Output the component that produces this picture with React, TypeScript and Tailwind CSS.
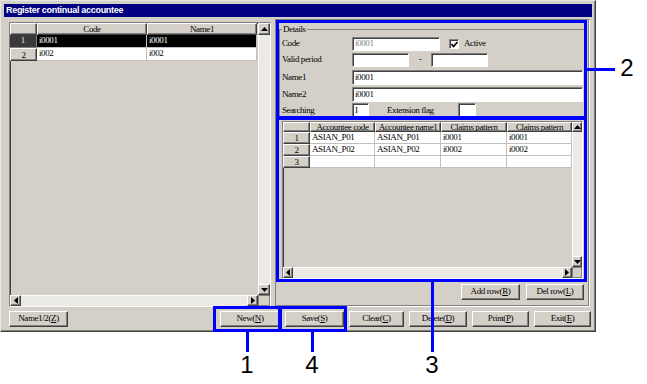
import React from 'react';

const raised =
  'border border-t-white border-l-white border-r-[#404040] border-b-[#404040] shadow-[inset_-1px_-1px_0_#808080] bg-[#d4d0c8]';
const sunken =
  'border border-t-[#808080] border-l-[#808080] border-r-white border-b-white shadow-[inset_1px_1px_0_#404040]';
const cellFont = "font-['Liberation_Serif',serif] text-[9px] tracking-[-0.4px]";

function Arrow({ dir }: { dir: 'up' | 'down' | 'left' | 'right' }) {
  const pts = {
    up: '0,4 3.5,0 7,4',
    down: '0,0 3.5,4 7,0',
    left: '4,0 0,3.5 4,7',
    right: '0,0 4,3.5 0,7',
  }[dir];
  const vertical = dir === 'up' || dir === 'down';
  return (
    <svg width={vertical ? 7 : 4} height={vertical ? 4 : 7} viewBox={vertical ? '0 0 7 4' : '0 0 4 7'}>
      <polygon points={pts} fill="#000" />
    </svg>
  );
}

function ScrollBtn({ dir, className }: { dir: 'up' | 'down' | 'left' | 'right'; className: string }) {
  return (
    <div className={`${raised} ${className} flex items-center justify-center shrink-0`}>
      <Arrow dir={dir} />
    </div>
  );
}

function Btn({ label, hot, w }: { label: string; hot: string; w: string }) {
  return (
    <div className={`${raised} ${w} h-[16px] flex items-center justify-center ${cellFont} text-black`}>
      {label}(<u>{hot}</u>)
    </div>
  );
}

function Hdr({ children }: { children?: React.ReactNode }) {
  return (
    <div className={`${raised} flex items-center justify-center overflow-hidden leading-[10px] ${cellFont} text-black`}>
      {children}
    </div>
  );
}

function Cell({ children, dark }: { children?: React.ReactNode; dark?: boolean }) {
  return (
    <div
      className={`border-r border-b border-[#c0c0c0] flex items-center pl-[2px] overflow-hidden ${cellFont} ${
        dark ? 'bg-black text-white' : 'bg-white text-black'
      }`}
    >
      {children}
    </div>
  );
}

function Field({ w, value, gray }: { w: string; value?: string; gray?: boolean }) {
  return (
    <div
      className={`${sunken} ${w} h-full bg-white flex items-center pl-[2px] ${cellFont} ${
        gray ? 'text-[#808080]' : 'text-black'
      }`}
    >
      {value}
    </div>
  );
}

function LeftGrid() {
  return (
    <div className={`${sunken} w-[262px] h-[285px] flex flex-col bg-[#d4d0c8]`}>
      <div className="flex flex-1 min-h-0">
        <div className="flex-1">
          <div className="grid grid-cols-[27px_110px_110px] grid-rows-[12px_13px_13px]">
            <Hdr />
            <Hdr>Code</Hdr>
            <Hdr>Name1</Hdr>
            <div className="bg-[#3a3a3a] border-r border-b border-[#808080] flex items-center justify-center text-[#e0e0e0] font-['Liberation_Serif',serif] text-[9px]">
              1
            </div>
            <Cell dark>i0001</Cell>
            <Cell dark>i0001</Cell>
            <Hdr>2</Hdr>
            <Cell>i002</Cell>
            <Cell>i002</Cell>
          </div>
        </div>
        <div className="w-[12px] flex flex-col">
          <ScrollBtn dir="up" className="h-[12px]" />
          <div className="flex-1 bg-[#eceae5] border-l border-white" />
          <ScrollBtn dir="down" className="h-[11px]" />
        </div>
      </div>
      <div className="h-[11px] flex">
        <ScrollBtn dir="left" className="w-[11px]" />
        <div className="flex-1 bg-[#eceae5] border-t border-white" />
        <ScrollBtn dir="right" className="w-[11px]" />
        <div className="w-[12px] border border-[#808080] bg-[#d4d0c8]" />
      </div>
    </div>
  );
}

function RightGrid() {
  const rows = [
    ['1', 'ASIAN_P01', 'ASIAN_P01', 'i0001', 'i0001'],
    ['2', 'ASIAN_P02', 'ASIAN_P02', 'i0002', 'i0002'],
    ['3', '', '', '', ''],
  ];
  return (
    <div className={`${sunken} ml-[6px] w-[301px] h-[158px] flex flex-col bg-[#d4d0c8]`}>
      <div className="flex flex-1 min-h-0">
        <div className="flex-1">
          <div className="grid grid-cols-[27px_65px_66px_66px_65px] grid-rows-[10px_12px_12px_12px]">
            <Hdr />
            <Hdr>Accountee code</Hdr>
            <Hdr>Accountee name1</Hdr>
            <Hdr>Claims pattern</Hdr>
            <Hdr>Claims pattern</Hdr>
            {rows.map((r) => (
              <React.Fragment key={r[0]}>
                <Hdr>{r[0]}</Hdr>
                <Cell>{r[1]}</Cell>
                <Cell>{r[2]}</Cell>
                <Cell>{r[3]}</Cell>
                <Cell>{r[4]}</Cell>
              </React.Fragment>
            ))}
          </div>
        </div>
        <div className="w-[10px] flex flex-col">
          <ScrollBtn dir="up" className="h-[10px]" />
          <div className="flex-1 bg-[#eceae5] border-l border-white" />
          <ScrollBtn dir="down" className="h-[11px]" />
        </div>
      </div>
      <div className="h-[11px] flex">
        <ScrollBtn dir="left" className="w-[10px]" />
        <div className="flex-1 bg-[#eceae5] border-t border-white" />
        <ScrollBtn dir="right" className="w-[10px]" />
        <div className="w-[10px] border border-[#808080] bg-[#d4d0c8]" />
      </div>
    </div>
  );
}

function Details() {
  const label = `w-[70px] shrink-0 ${cellFont} text-black`;
  return (
    <fieldset className="mt-[4px] ml-[3px] mr-[2px] border border-[#808080] shadow-[1px_1px_0_#fff] pl-[2px] pr-[2px] pb-0 h-[94px]">
      <legend className={`px-[1px] leading-[10px] ${cellFont} text-black`}>Details</legend>
      <div className="flex items-center h-[14px] mt-[3px]">
        <div className={label}>Code</div>
        <Field w="w-[88px]" value="i0001" gray />
        <div className={`${sunken} ml-[9px] w-[10px] h-[10px] bg-white flex items-center justify-center`}>
          <svg width="7" height="7" viewBox="0 0 7 7">
            <polyline points="0.5,3 2.5,5.5 6.5,1" fill="none" stroke="#000" strokeWidth="1.6" />
          </svg>
        </div>
        <div className={`ml-[5px] ${cellFont} text-black`}>Active</div>
      </div>
      <div className="flex items-center h-[14px] mt-[2px]">
        <div className={label}>Valid period</div>
        <Field w="w-[57px]" />
        <div className={`w-[22px] text-center ${cellFont} text-black`}>-</div>
        <Field w="w-[57px]" />
      </div>
      <div className="flex items-center h-[15px] mt-[3px]">
        <div className={label}>Name1</div>
        <Field w="flex-1" value="i0001" />
      </div>
      <div className="flex items-center h-[15px] mt-[2px]">
        <div className={label}>Name2</div>
        <Field w="flex-1" value="i0001" />
      </div>
      <div className="flex items-center h-[15px] mt-[1px]">
        <div className={label}>Searching</div>
        <Field w="w-[17px]" value="I" />
        <div className={`ml-[18px] w-[71px] ${cellFont} text-black`}>Extension flag</div>
        <Field w="w-[18px]" />
      </div>
    </fieldset>
  );
}

export default function App() {
  return (
    <div className="relative w-[647px] h-[384px] bg-white overflow-hidden">
      <div className="w-[596px] h-[332px] bg-[#d4d0c8] border border-t-[#e8e6e0] border-l-[#e8e6e0] border-r-[#404040] border-b-[#404040] shadow-[inset_-1px_-1px_0_#808080] flex flex-col">
        <div className="mx-[3px] mt-[3px] h-[13px] bg-[#000080] flex items-center pl-[2px]">
          <span className="font-['Liberation_Sans',sans-serif] text-[9px] font-bold tracking-[-0.3px] text-white">
            Register continual accountee
          </span>
        </div>

        <div className="flex items-start pl-[8px] mt-[2px]">
          <div className="mt-[3px]">
            <LeftGrid />
          </div>
          <div className="ml-[4px] w-[314px] h-[287px] border border-[#808080] shadow-[1px_1px_0_#fff] flex flex-col">
            <Details />
            <div className="mt-[3px]">
              <RightGrid />
            </div>
            <div className="flex justify-end gap-[6px] mr-[4px] mt-[5px]">
              <Btn label="Add row" hot="R" w="w-[59px]" />
              <Btn label="Del row" hot="L" w="w-[58px]" />
            </div>
          </div>
        </div>

        <div className="flex items-center pl-[8px] mt-[4px]">
          <Btn label="Name1/2" hot="Z" w="w-[59px]" />
          <div className="ml-auto mr-[4px] flex gap-[5px]">
            <Btn label="New" hot="N" w="w-[60px]" />
            <Btn label="Save" hot="S" w="w-[59px]" />
            <Btn label="Clear" hot="C" w="w-[55px]" />
            <Btn label="Delete" hot="D" w="w-[58px]" />
            <Btn label="Print" hot="P" w="w-[57px]" />
            <Btn label="Exit" hot="E" w="w-[57px]" />
          </div>
        </div>
      </div>

      {/* callout annotations */}
      <div className="absolute left-[276px] top-[20px] w-[311px] h-[99px] border-[3px] border-[#0000ff]" />
      <div className="absolute left-[276px] top-[117px] w-[311px] h-[165px] border-[3px] border-[#0000ff]" />
      <div className="absolute left-[587px] top-[68px] w-[28px] h-[3px] bg-[#0000ff]" />
      <div className="absolute left-[213px] top-[306px] w-[68px] h-[26px] border-[3px] border-[#0000ff]" />
      <div className="absolute left-[279px] top-[306px] w-[68px] h-[26px] border-[3px] border-[#0000ff]" />
      <div className="absolute left-[246px] top-[332px] w-[3px] h-[20px] bg-[#0000ff]" />
      <div className="absolute left-[311px] top-[332px] w-[3px] h-[20px] bg-[#0000ff]" />
      <div className="absolute left-[431px] top-[282px] w-[3px] h-[70px] bg-[#0000ff]" />

      <div className="absolute left-[617px] top-[56px] w-[20px] text-center font-['Liberation_Sans',sans-serif] text-[24px] leading-none text-black">
        2
      </div>
      <div className="absolute left-[237px] top-[353px] w-[20px] text-center font-['Liberation_Sans',sans-serif] text-[24px] leading-none text-black">
        1
      </div>
      <div className="absolute left-[302px] top-[353px] w-[20px] text-center font-['Liberation_Sans',sans-serif] text-[24px] leading-none text-black">
        4
      </div>
      <div className="absolute left-[422px] top-[353px] w-[20px] text-center font-['Liberation_Sans',sans-serif] text-[24px] leading-none text-black">
        3
      </div>
    </div>
  );
}
